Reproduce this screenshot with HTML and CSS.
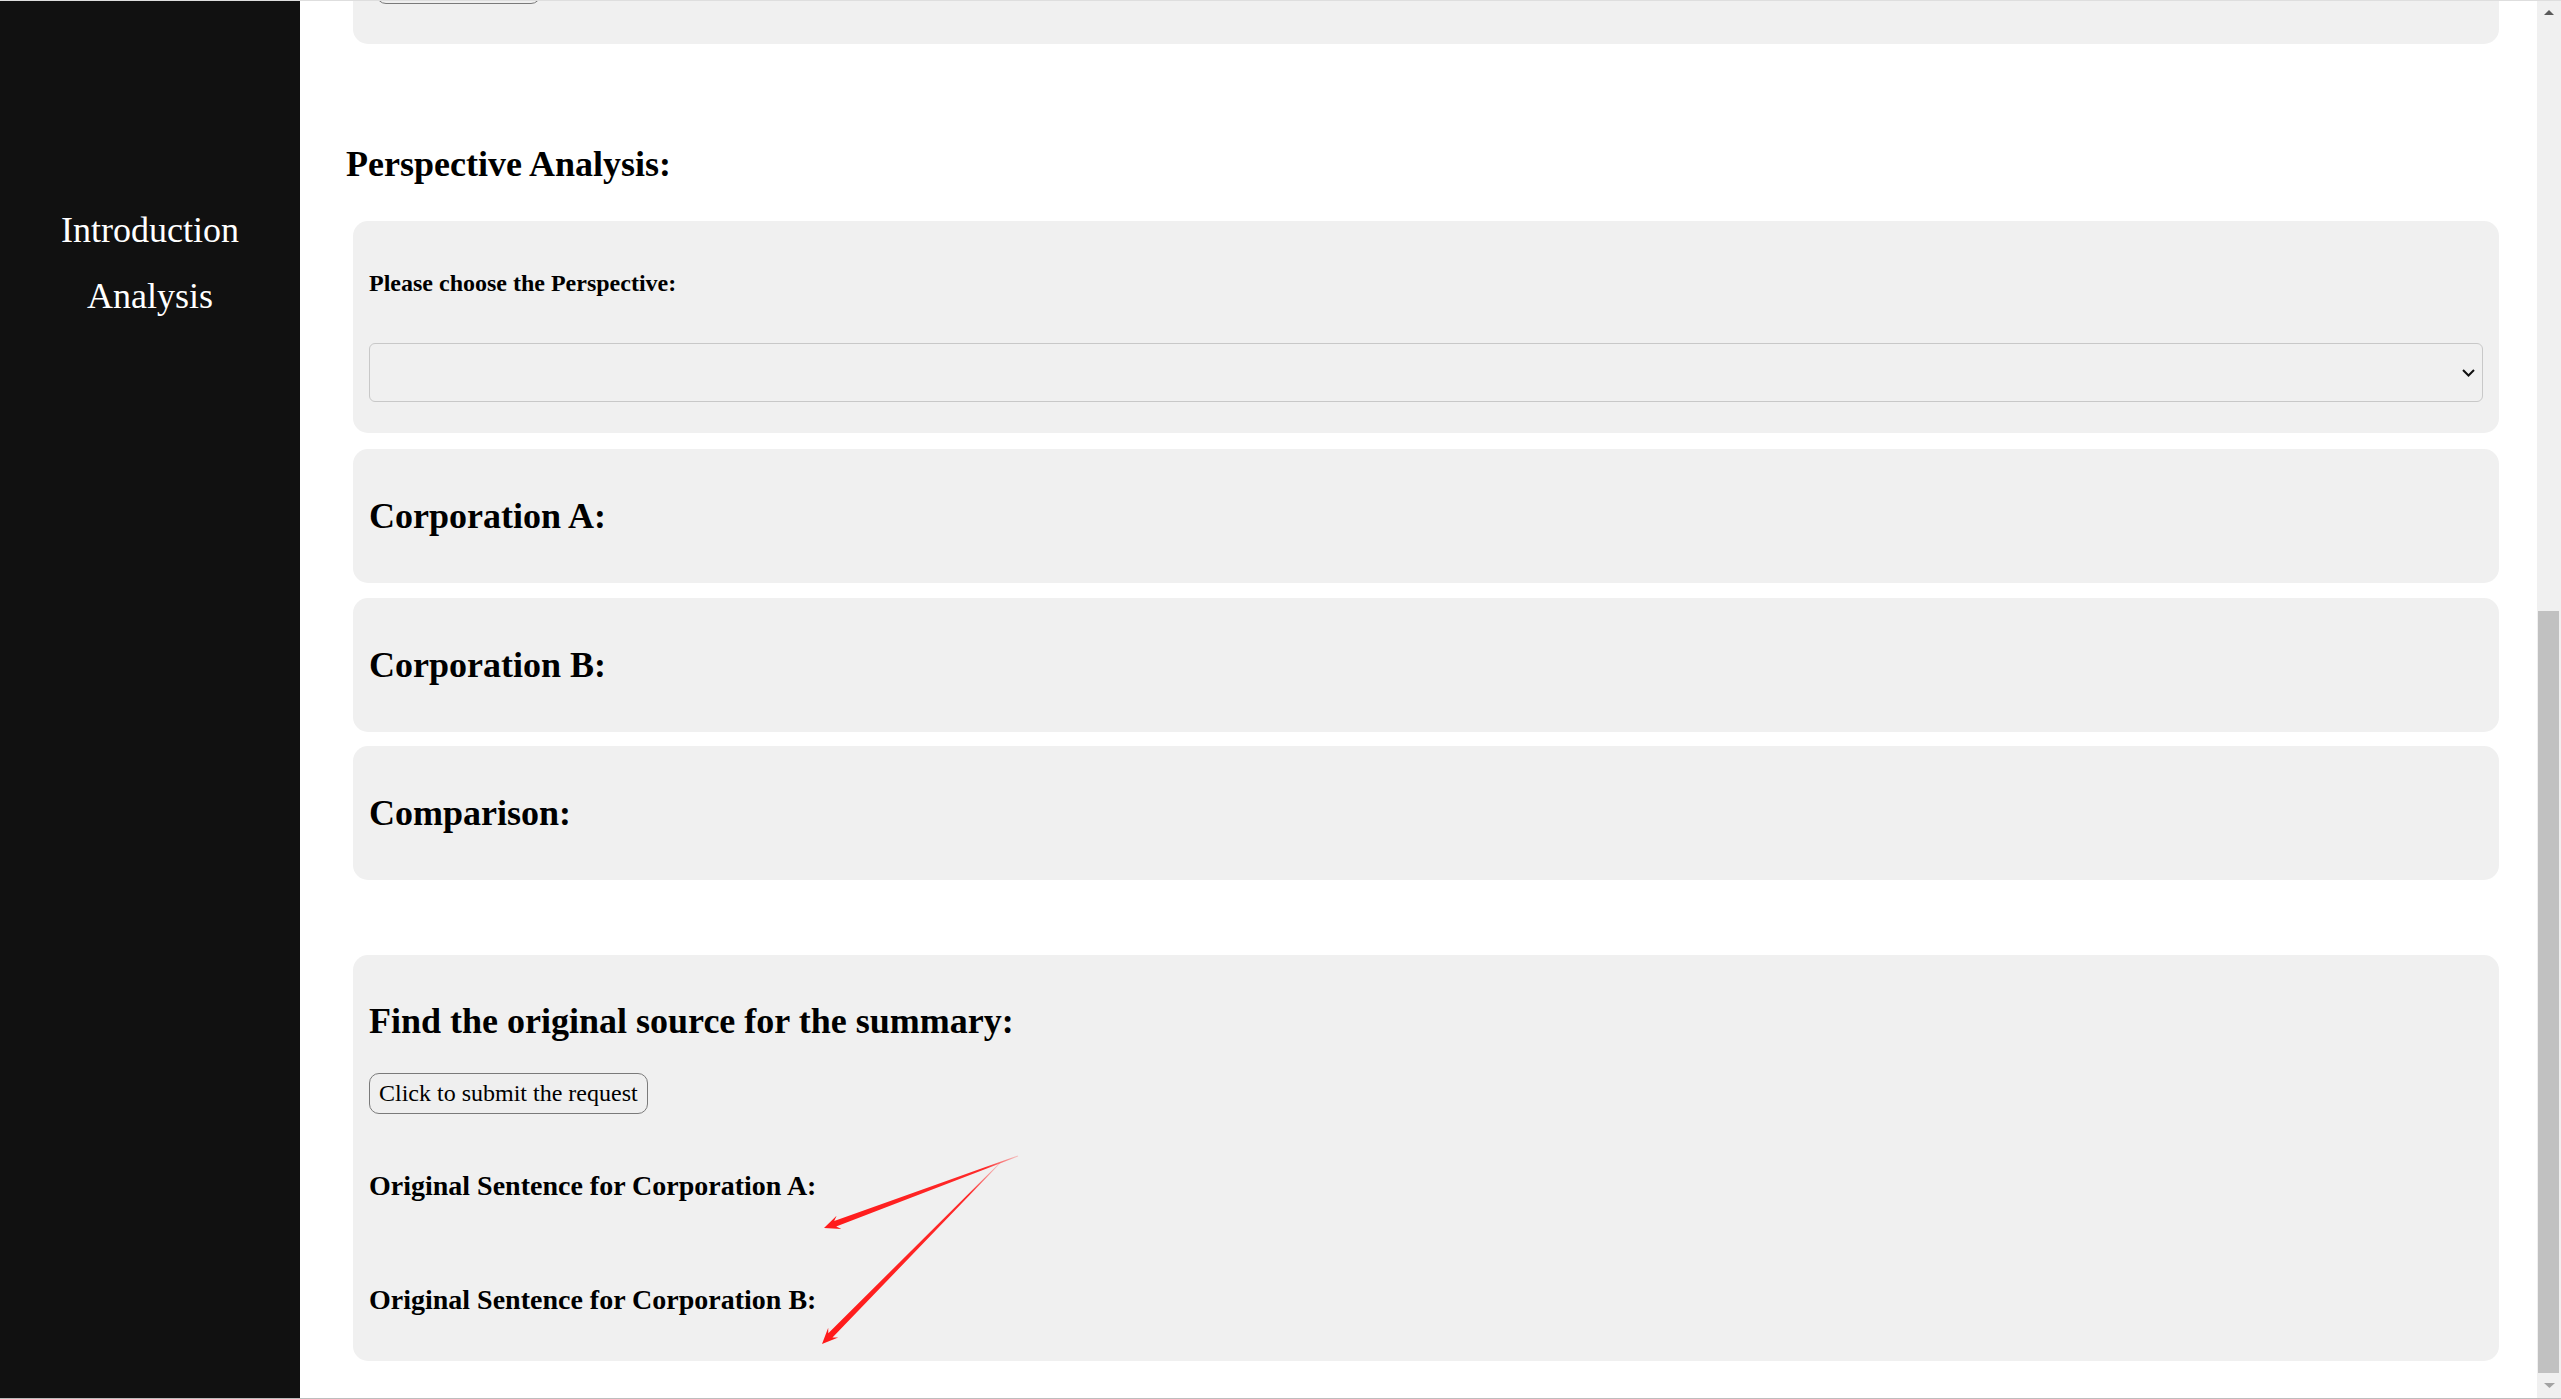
FILE: index.html
```html
<!DOCTYPE html>
<html lang="en">
<head>
<meta charset="utf-8">
<title>Perspective Analysis</title>
<link rel="stylesheet" href="styles.css">
</head>
<body>
<div class="window">
  <aside class="sidebar">
    <nav class="nav">
      <a class="nav-item">Introduction</a>
      <a class="nav-item">Analysis</a>
    </nav>
  </aside>
  <main class="main">
    <section class="card card-prev">
      <button class="btn btn-prev" aria-label="Submit"></button>
    </section>

    <h2 class="section-title">Perspective Analysis:</h2>

    <section class="card card-select">
      <h4 class="label">Please choose the Perspective:</h4>
      <div class="select">
        <span class="select-value"></span>
        <svg class="chevron" width="13" height="8" viewBox="0 0 13 8"><polyline points="1,1 6.5,6.5 12,1" fill="none" stroke="#111" stroke-width="2"/></svg>
      </div>
    </section>

    <section class="card card-result"><h2 class="card-title">Corporation A:</h2></section>
    <section class="card card-result"><h2 class="card-title">Corporation B:</h2></section>
    <section class="card card-result card-last-result"><h2 class="card-title">Comparison:</h2></section>

    <section class="card card-source">
      <h2 class="source-title">Find the original source for the summary:</h2>
      <button class="btn btn-submit">Click to submit the request</button>
      <h3 class="sentence sentence-a">Original Sentence for Corporation A:</h3>
      <h3 class="sentence sentence-b">Original Sentence for Corporation B:</h3>
      <svg class="annot" width="700" height="420" viewBox="0 0 700 420">
        <defs>
          <linearGradient id="g1" gradientUnits="userSpaceOnUse" x1="668" y1="200" x2="471" y2="273">
            <stop offset="0" stop-color="#ff2020" stop-opacity="0.15"/>
            <stop offset="0.18" stop-color="#ff2020" stop-opacity="0.95"/>
            <stop offset="1" stop-color="#ff1a1a"/>
          </linearGradient>
          <linearGradient id="g2" gradientUnits="userSpaceOnUse" x1="648" y1="207" x2="469" y2="389">
            <stop offset="0" stop-color="#ff2020" stop-opacity="0.15"/>
            <stop offset="0.18" stop-color="#ff2020" stop-opacity="0.95"/>
            <stop offset="1" stop-color="#ff1a1a"/>
          </linearGradient>
        </defs>
        <polygon fill="url(#g1)" points="471,273 488.4,274.0 483.2,271.6 665.2,201.5 664.8,200.5 481.2,266.0 483.6,260.8"/>
        <polygon fill="url(#g2)" points="469,389 485.2,382.5 479.5,382.5 647.3,208.3 646.7,207.7 475.3,378.3 475.2,372.7"/>
      </svg>
    </section>
  </main>
  <div class="scrollbar">
    <div class="sb-btn sb-up">
      <svg width="10" height="5" viewBox="0 0 10 5"><polygon points="0,5 5,0 10,5" fill="#5a5a5a"/></svg>
    </div>
    <div class="sb-space"></div>
    <div class="sb-thumb"></div>
    <div class="sb-btn sb-down">
      <svg width="11" height="5" viewBox="0 0 11 5"><polygon points="0,0 11,0 5.5,5" fill="#a3a3a3"/></svg>
    </div>
  </div>
</div>
</body>
</html>
```

FILE: styles.css
```css
* { box-sizing: border-box; }

html, body {
  margin: 0;
  padding: 0;
  background: #ffffff;
  overflow: hidden;
}

body {
  font-family: "Liberation Serif", "Times New Roman", serif;
  color: #000;
}

.window {
  width: 2561px;
  height: 1399px;
  display: flex;
  border-top: 1px solid #dedede;
  border-bottom: 1px solid #bdbdbd;
  overflow: hidden;
}

/* Sidebar */
.sidebar {
  width: 300px;
  flex: 0 0 300px;
  background: #111111;
}

.nav {
  display: flex;
  flex-direction: column;
  align-items: center;
  gap: 25px;
  padding-top: 209px;
}

.nav-item {
  color: #ffffff;
  font-size: 36px;
  line-height: 41px;
  text-decoration: none;
}

/* Main */
.main {
  flex: 1 1 auto;
  min-width: 0;
  padding: 0 31px 0 46px;
}

.card {
  background: #f0f0f0;
  border-radius: 15px;
  margin: 0 7px;
  padding: 16px;
}

.card-prev {
  margin-top: -54px;
  padding-bottom: 40px;
}

.btn {
  display: block;
  font-family: "Liberation Serif", "Times New Roman", serif;
  font-size: 24px;
  line-height: 27px;
  height: 41px;
  padding: 0 9px;
  background: #efefef;
  color: #000;
  border: 1px solid #7a7a7a;
  border-radius: 10px;
}

.btn-prev {
  width: 165px;
  margin-left: 7px;
}

.section-title {
  font-size: 36px;
  line-height: 41px;
  font-weight: bold;
  margin: 100px 0 36px;
}

.card-select {
  margin-bottom: 16px;
}

.label {
  font-size: 24px;
  line-height: 28px;
  font-weight: bold;
  margin: 32px 0 46px;
}

.select {
  height: 59px;
  border: 1px solid #c8c8c8;
  border-radius: 6px;
  display: flex;
  align-items: center;
  justify-content: space-between;
  padding: 0 7px 0 12px;
  margin-bottom: 15px;
}

.chevron { display: block; }

.card-result {
  margin-bottom: 14.5px;
}

.card-last-result {
  margin-bottom: 75px;
}

.card-title {
  font-size: 36px;
  line-height: 42px;
  font-weight: bold;
  margin: 30px 0;
}

.card-source {
  position: relative;
}

.source-title {
  font-size: 36px;
  line-height: 41px;
  font-weight: bold;
  margin: 30px 0 31px;
}

.sentence {
  font-size: 28px;
  line-height: 32px;
  font-weight: bold;
  margin: 0;
}

.sentence-a { margin-top: 56px; }
.sentence-b { margin-top: 82px; margin-bottom: 29px; }

.annot {
  position: absolute;
  left: 0;
  top: 0;
  pointer-events: none;
  overflow: visible;
}

/* Scrollbar */
.scrollbar {
  width: 24px;
  flex: 0 0 24px;
  background: #f0f0f0;
  display: flex;
  flex-direction: column;
}

.sb-btn {
  display: flex;
  align-items: center;
  justify-content: center;
}

.sb-btn svg { display: block; }

.sb-up { height: 22px; }

.sb-space { height: 588px; }

.sb-thumb {
  height: 762px;
  background: #c1c1c1;
  margin: 0 2px 0 1px;
}

.sb-down {
  flex: 1 1 auto;
}
```
